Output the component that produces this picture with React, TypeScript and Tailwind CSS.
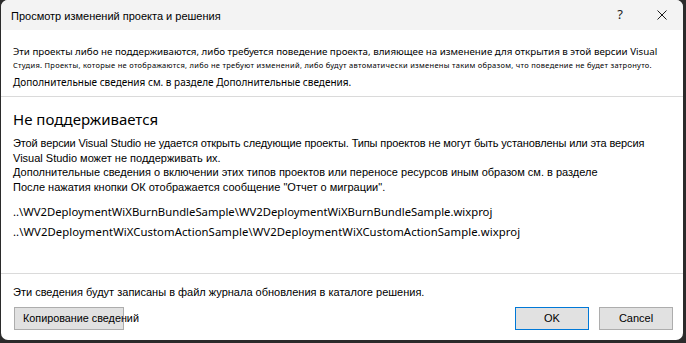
import React from 'react';

const noto = { fontFamily: '"Noto Sans", "Open Sans", sans-serif' };
const arial = { fontFamily: '"Liberation Sans", Arial, sans-serif' };

const App: React.FC = () => {
  return (
    <div className="w-[686px] h-[343px] bg-[#2b2b2b] overflow-hidden">
      <div className="ml-[1px] w-[682px] h-[340px] bg-white rounded-[7px] overflow-hidden flex flex-col">
        {/* title bar */}
        <div className="h-[30px] bg-[#f3f3f3] flex items-center shrink-0">
          <span className="pl-[10px] pt-[2px] text-[11px] text-black leading-none" style={arial}>
            Просмотр изменений проекта и решения
          </span>
          <span className="ml-auto mr-[34px] text-[13px] text-[#222]" style={noto}>
            ?
          </span>
          <svg width="10" height="10" viewBox="0 0 10 10" className="mr-[16px]">
            <path d="M0.5 0.5 L9.5 9.5 M9.5 0.5 L0.5 9.5" stroke="#1a1a1a" strokeWidth="1" fill="none" />
          </svg>
        </div>

        {/* intro */}
        <div className="h-[67px] shrink-0 pl-[12px] pt-[15px] border-b border-[#dadada]" style={noto}>
          <div className="text-[9.75px] leading-[14px] text-black whitespace-nowrap">
            Эти проекты либо не поддерживаются, либо требуется поведение проекта, влияющее на изменение для открытия в этой версии Visual
          </div>
          <div className="mt-[1px] text-[7.5px] leading-[10px] text-black whitespace-nowrap tracking-[0.29px]">
            Студия. Проекты, которые не отображаются, либо не требуют изменений, либо будут автоматически изменены таким образом, что поведение не будет затронуто.
          </div>
          <div className="mt-[5px] text-[10px] leading-[14px] text-black whitespace-nowrap">
            Дополнительные сведения см. в разделе Дополнительные сведения.
          </div>
        </div>

        {/* details */}
        <div className="h-[177px] shrink-0 pl-[12px] pt-[10px] border-b border-[#dadada]">
          <div className="text-[15px] leading-[24px] text-black" style={noto}>
            Не поддерживается
          </div>
          <div className="mt-[5px] text-[11px] leading-[14.6px] text-black whitespace-nowrap" style={arial}>
            <div className="tracking-[-0.12px]">Этой версии Visual Studio не удается открыть следующие проекты. Типы проектов не могут быть установлены или эта версия</div>
            <div>Visual Studio может не поддерживать их.</div>
            <div>Дополнительные сведения о включении этих типов проектов или переносе ресурсов иным образом см. в разделе</div>
            <div>После нажатия кнопки ОК отображается сообщение "Отчет о миграции".</div>
          </div>
          <div className="mt-[8px] text-[11.3px] leading-[20px] text-black whitespace-nowrap" style={noto}>
            <div>..\WV2DeploymentWiXBurnBundleSample\WV2DeploymentWiXBurnBundleSample.wixproj</div>
            <div className="tracking-[0.08px]">..\WV2DeploymentWiXCustomActionSample\WV2DeploymentWiXCustomActionSample.wixproj</div>
          </div>
        </div>

        {/* footer */}
        <div className="flex-1 pl-[12px] pt-[11px]" style={arial}>
          <div className="text-[11px] leading-[14px] text-black">
            Эти сведения будут записаны в файл журнала обновления в каталоге решения.
          </div>
          <div className="mt-[8px] flex items-center">
            <button className="w-[110px] h-[23px] ml-[1px] bg-[#e1e1e1] border border-[#adadad] text-[10.8px] text-black text-left pl-[8px] whitespace-nowrap overflow-visible">
              Копирование сведений
            </button>
            <button className="ml-auto w-[74px] h-[23px] bg-[#e1e1e1] border border-[#0078d7] text-[11px] text-black">
              OK
            </button>
            <button className="ml-[10px] mr-[10px] w-[74px] h-[23px] bg-[#e1e1e1] border border-[#adadad] text-[11px] text-black">
              Cancel
            </button>
          </div>
        </div>
      </div>
    </div>
  );
};

export default App;
